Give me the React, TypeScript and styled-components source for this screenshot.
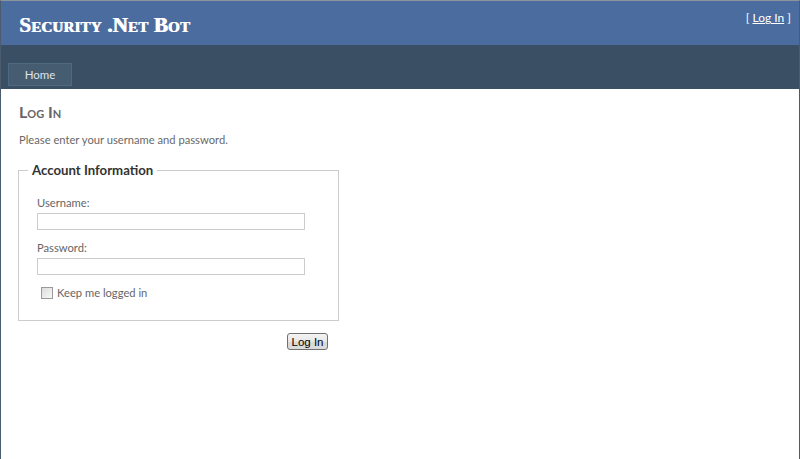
import styled, { createGlobalStyle } from 'styled-components';

const GlobalStyle = createGlobalStyle`
  html, body {
    margin: 0;
    padding: 0;
    background: #fff;
  }
  body {
    font-family: Lato, "Open Sans", sans-serif;
    font-size: 11.2px;
    color: #696969;
  }
`;

const Page = styled.div`
  box-sizing: border-box;
  width: 800px;
  min-height: calc(100vh + 2px);
  border: 1px solid #4a5c6e;
  border-top-color: #8c939b;
  background: #fff;
`;

const Header = styled.header`
  display: flex;
  flex-direction: column;
  background: #3a4f63;
`;

const TitleBar = styled.div`
  height: 44px;
  display: flex;
  align-items: flex-start;
  justify-content: space-between;
  background: #4b6c9e;
  padding: 0 8px 0 18px;
`;

const Title = styled.h1`
  margin: 12px 0 0;
  font-family: "Liberation Serif", "Times New Roman", serif;
  font-variant: small-caps;
  font-weight: 900;
  font-size: 21px;
  letter-spacing: 0.2px;
  color: #fff;
  text-shadow: 0.8px 0 0 #fff;
`;

const LoginDisplay = styled.div`
  margin-top: 9px;
  font-size: 12px;
  color: #fff;

  a {
    color: #fff;
    text-decoration: underline;
  }
`;

const MenuBar = styled.nav`
  height: 44px;
  display: flex;
  align-items: flex-end;
  padding: 0 7px 3px;
  box-sizing: border-box;
`;

const MenuItem = styled.a`
  box-sizing: border-box;
  width: 64px;
  height: 23px;
  display: flex;
  align-items: center;
  justify-content: center;
  background: #465c71;
  border: 1px solid #4f6980;
  color: #dde4ec;
  font-size: 11.5px;
  text-decoration: none;
`;

const Main = styled.main`
  padding: 0 17px;
`;

const Heading = styled.h2`
  margin: 13px 0 0 1px;
  font-size: 16px;
  font-weight: 700;
  font-variant: small-caps;
  color: #666;
`;

const Intro = styled.p`
  margin: 12px 0 0 1px;
`;

const Fieldset = styled.fieldset`
  box-sizing: border-box;
  width: 321px;
  margin: 16px 0 0;
  padding: 7px 18px 21px;
  border: 1px solid #ccc;
`;

const Legend = styled.legend`
  margin-left: -9px;
  padding: 0 4px;
  font-size: 13.2px;
  font-weight: 700;
  color: #333;
`;

const Field = styled.div`
  display: flex;
  flex-direction: column;
  gap: 4px;
  margin-top: 11px;
`;

const Label = styled.label`
  color: #666;
`;

const TextEntry = styled.input`
  box-sizing: border-box;
  width: 268px;
  height: 17px;
  margin: 0;
  border: 1px solid #ccc;
  padding: 0 2px;
`;

const CheckRow = styled.label`
  display: flex;
  align-items: center;
  gap: 4px;
  margin: 11px 0 0 4px;
  color: #666;
`;

const CheckBox = styled.span`
  box-sizing: border-box;
  width: 12px;
  height: 12px;
  border: 1px solid #9a9a9a;
  background: linear-gradient(135deg, #dcdcdc, #f8f8f8);
`;

const SubmitRow = styled.p`
  width: 321px;
  margin: 12px 0 0;
  padding-right: 11px;
  box-sizing: border-box;
  display: flex;
  justify-content: flex-end;
`;

const Button = styled.button`
  box-sizing: border-box;
  width: 41px;
  height: 17px;
  padding: 0;
  border: 1px solid #707070;
  border-radius: 3px;
  background: linear-gradient(#f4f4f4, #e6e6e6 50%, #d8d8d8 51%, #dcdcdc);
  font-family: "Liberation Sans", Arial, sans-serif;
  font-size: 11.5px;
  color: #000;
`;

export default function App() {
  return (
    <>
      <GlobalStyle />
      <Page>
        <Header>
          <TitleBar>
            <Title>Security .Net Bot</Title>
            <LoginDisplay>
              [ <a href="#">Log In</a> ]
            </LoginDisplay>
          </TitleBar>
          <MenuBar>
            <MenuItem href="#">Home</MenuItem>
          </MenuBar>
        </Header>
        <Main>
          <Heading>Log In</Heading>
          <Intro>Please enter your username and password.</Intro>
          <Fieldset>
            <Legend>Account Information</Legend>
            <Field>
              <Label>Username:</Label>
              <TextEntry type="text" />
            </Field>
            <Field>
              <Label>Password:</Label>
              <TextEntry type="password" />
            </Field>
            <CheckRow>
              <CheckBox />
              Keep me logged in
            </CheckRow>
          </Fieldset>
          <SubmitRow>
            <Button>Log In</Button>
          </SubmitRow>
        </Main>
      </Page>
    </>
  );
}
